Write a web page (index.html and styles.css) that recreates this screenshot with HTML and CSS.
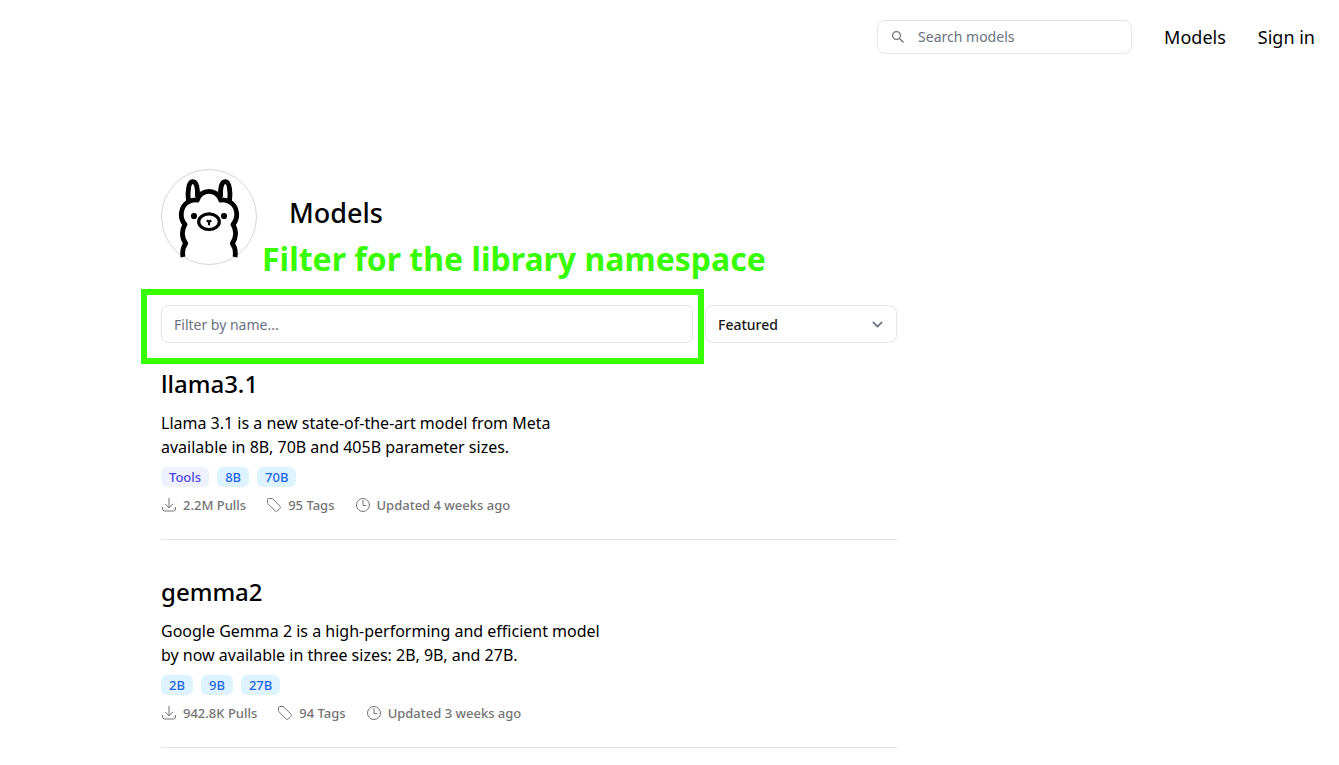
FILE: index.html
```html
<!DOCTYPE html>
<html lang="en">
<head>
<meta charset="utf-8">
<meta name="viewport" content="width=device-width, initial-scale=1">
<title>Models</title>
<link rel="stylesheet" href="styles.css">
</head>
<body>
<svg class="sprite" aria-hidden="true">
  <symbol id="download" viewBox="0 0 16 16"><path d="M8 1.500v9M4.500 7.300 8 10.800l3.500-3.500M1.500 10.500V12a2 2 0 0 0 2 2h9a2 2 0 0 0 2-2v-1.500"/></symbol>
  <symbol id="tag" viewBox="0 0 16 16"><path d="M5.700 1.500H2.600a1.100 1.100 0 0 0-1.100 1.100v3.100c0 .4.200.8.500 1.100l7.200 7.200c.6.600 1.500.6 2.100 0l2.700-2.700c.6-.6.600-1.500 0-2.100L6.800 2c-.3-.3-.7-.5-1.100-.5Z"/></symbol>
  <symbol id="clock" viewBox="0 0 16 16"><circle cx="8" cy="8" r="6.500"/><path d="M8 3.500V8.500h3"/></symbol>
</svg>
<header class="topbar">
  <form class="search" role="search">
    <svg class="search-icon" viewBox="0 0 14 14" aria-hidden="true"><circle cx="5.500" cy="5.500" r="3.900"/><path d="m8.500 8.500 4 4"/></svg>
    <input class="search-input" type="text" aria-label="Search models" placeholder="Search models">
  </form>
  <a class="nav-link" href="#">Models</a>
  <a class="nav-link" href="#">Sign in</a>
</header>
<main class="page">
  <div class="profile">
    <svg class="avatar" viewBox="0 0 96 96" aria-hidden="true">
      <circle cx="48" cy="48" r="47.500" fill="#fff" stroke="#d4d4d4"/>
      <g fill="none" stroke="#000" stroke-width="4.800" stroke-linejoin="round">
        <path d="M22 88c-.8-5 0-10 2.700-13.500-4-5.500-4.500-13-.7-19-6-6.500-4.500-18 3-22.500 2.800-1.800 6-2.400 9.300-2C38.500 25.500 43 22.400 48 22.400s9.500 3.100 11.700 8.600c3.300-.4 6.500.2 9.300 2 7.500 4.500 9 16 3 22.500 3.800 6 3.300 13.500-.7 19 2.700 3.500 3.500 8.500 2.700 13.500"/>
        <path d="M27.500 32.500c-1.400-10 .2-19.800 4.200-19.800s5.400 7.300 4.600 15.300M68.500 32.500c1.400-10-.2-19.800-4.200-19.800s-5.400 7.300-4.600 15.300"/>
        <ellipse cx="48" cy="52.700" rx="10.300" ry="7.800" stroke-width="3.200"/>
      </g>
      <circle cx="33" cy="47" r="3.100"/><circle cx="63" cy="47" r="3.100"/>
      <path d="m45.700 51.500 2.300 1.300 2.300-1.300M48 52.500v3.800" fill="none" stroke="#000" stroke-width="2.200"/>
    </svg>
    <h1 class="title">Models</h1>
    <strong class="note">Filter for the library namespace</strong>
  </div>
  <form class="filters">
    <div class="filter-field">
      <input class="filter-input" type="text" aria-label="Filter by name" placeholder="Filter by name...">
      <span class="highlight"></span>
    </div>
    <div class="sort">
      <select class="sort-select" aria-label="Sort models"><option>Featured</option><option>Most popular</option><option>Newest</option></select>
      <svg class="chevron" viewBox="0 0 20 20" aria-hidden="true"><path d="m6 8 4 4 4-4"/></svg>
    </div>
  </form>
  <ul class="models">
    <li class="model">
      <h2 class="model-name">llama3.1</h2>
      <p class="description">Llama 3.1 is a new state-of-the-art model from Meta<br>available in 8B, 70B and 405B parameter sizes.</p>
      <div class="chips"><span class="chip chip-tools">Tools</span><span class="chip">8B</span><span class="chip">70B</span></div>
      <div class="stats">
        <span class="stat"><svg class="icon"><use href="#download"/></svg>2.2M Pulls</span>
        <span class="stat"><svg class="icon"><use href="#tag"/></svg>95 Tags</span>
        <span class="stat"><svg class="icon"><use href="#clock"/></svg>Updated 4 weeks ago</span>
      </div>
    </li>
    <li class="model">
      <h2 class="model-name">gemma2</h2>
      <p class="description">Google Gemma 2 is a high-performing and efficient model<br>by now available in three sizes: 2B, 9B, and 27B.</p>
      <div class="chips"><span class="chip">2B</span><span class="chip">9B</span><span class="chip">27B</span></div>
      <div class="stats">
        <span class="stat"><svg class="icon"><use href="#download"/></svg>942.8K Pulls</span>
        <span class="stat"><svg class="icon"><use href="#tag"/></svg>94 Tags</span>
        <span class="stat"><svg class="icon"><use href="#clock"/></svg>Updated 3 weeks ago</span>
      </div>
    </li>
  </ul>
</main>
</body>
</html>
```
FILE: styles.css
```css
* { box-sizing: border-box; }
body { margin: 0; background: #fff; color: #000; font: 16px/24px "Noto Sans", sans-serif; }
h1, h2, p, ul { margin: 0; padding: 0; }
input, select { font: inherit; }
.sprite { position: absolute; width: 0; height: 0; }
.topbar { display: flex; align-items: center; justify-content: flex-end; gap: 32px; padding: 20px 24px; }
.search { display: flex; align-items: center; gap: 13px; width: 255px; height: 34px; padding: 0 13px; border: 1px solid #e5e5e5; border-radius: 8px; }
.search-icon { flex: none; width: 14px; height: 14px; fill: none; stroke: #737373; stroke-width: 1.3; }
.search-input { flex: 1; min-width: 0; padding: 0; border: 0; outline: 0; background: transparent; font-size: 14px; line-height: 20px; }
.search-input::placeholder, .filter-input::placeholder { color: #6b7280; opacity: 1; }
.nav-link { color: #000; font-size: 18px; line-height: 28px; text-decoration: none; }
.page { max-width: 897px; padding: 95px 0 0 161px; }
.profile { position: relative; display: flex; align-items: center; gap: 32px; }
.avatar { width: 96px; height: 96px; }
.title { padding-bottom: 8px; font-size: 27px; line-height: 36px; font-weight: 500; }
.note { position: absolute; left: 101px; top: 68px; color: #38ff00; font-size: 32px; line-height: 44px; white-space: nowrap; }
.filters { display: flex; gap: 12px; margin-top: 40px; }
.filter-field { position: relative; flex: 1; }
.filter-input { display: block; width: 100%; height: 38px; padding: 0 12px; border: 1px solid #e5e5e5; border-radius: 6px; font-size: 14px; }
.highlight { position: absolute; inset: -16px -11px -21px -20px; border: 6px solid #38ff00; pointer-events: none; }
.sort { position: relative; width: 192px; }
.sort-select { display: block; width: 100%; height: 38px; padding: 1px 12px 0; border: 1px solid #e5e5e5; border-radius: 8px; background: #fff; color: #171717; font-size: 14px; font-weight: 500; appearance: none; }
.chevron { position: absolute; right: 9px; top: 9px; width: 21px; height: 21px; fill: none; stroke: #6b7280; stroke-width: 1.6; stroke-linecap: round; stroke-linejoin: round; pointer-events: none; }
.models { display: grid; gap: 36px; margin-top: 25px; list-style: none; }
.model { padding-bottom: 24px; border-bottom: 1px solid #e5e5e5; }
.model-name { margin-bottom: 11px; font-size: 24px; line-height: 32px; font-weight: 500; }
.chips { display: flex; gap: 8px; margin: 8px 0; }
.chip { padding: 0 8px; border-radius: 6px; background: #ddf4ff; color: #2563eb; font-size: 13px; line-height: 20px; font-weight: 500; }
.chip-tools { background: #eef2ff; color: #4f46e5; }
.stats { display: flex; gap: 20px; color: #737373; font-size: 13px; line-height: 20px; font-weight: 500; }
.stat { display: flex; align-items: center; gap: 6px; }
.icon { width: 16px; height: 16px; fill: none; stroke: currentColor; stroke-width: 1; stroke-linecap: round; stroke-linejoin: round; }
```
